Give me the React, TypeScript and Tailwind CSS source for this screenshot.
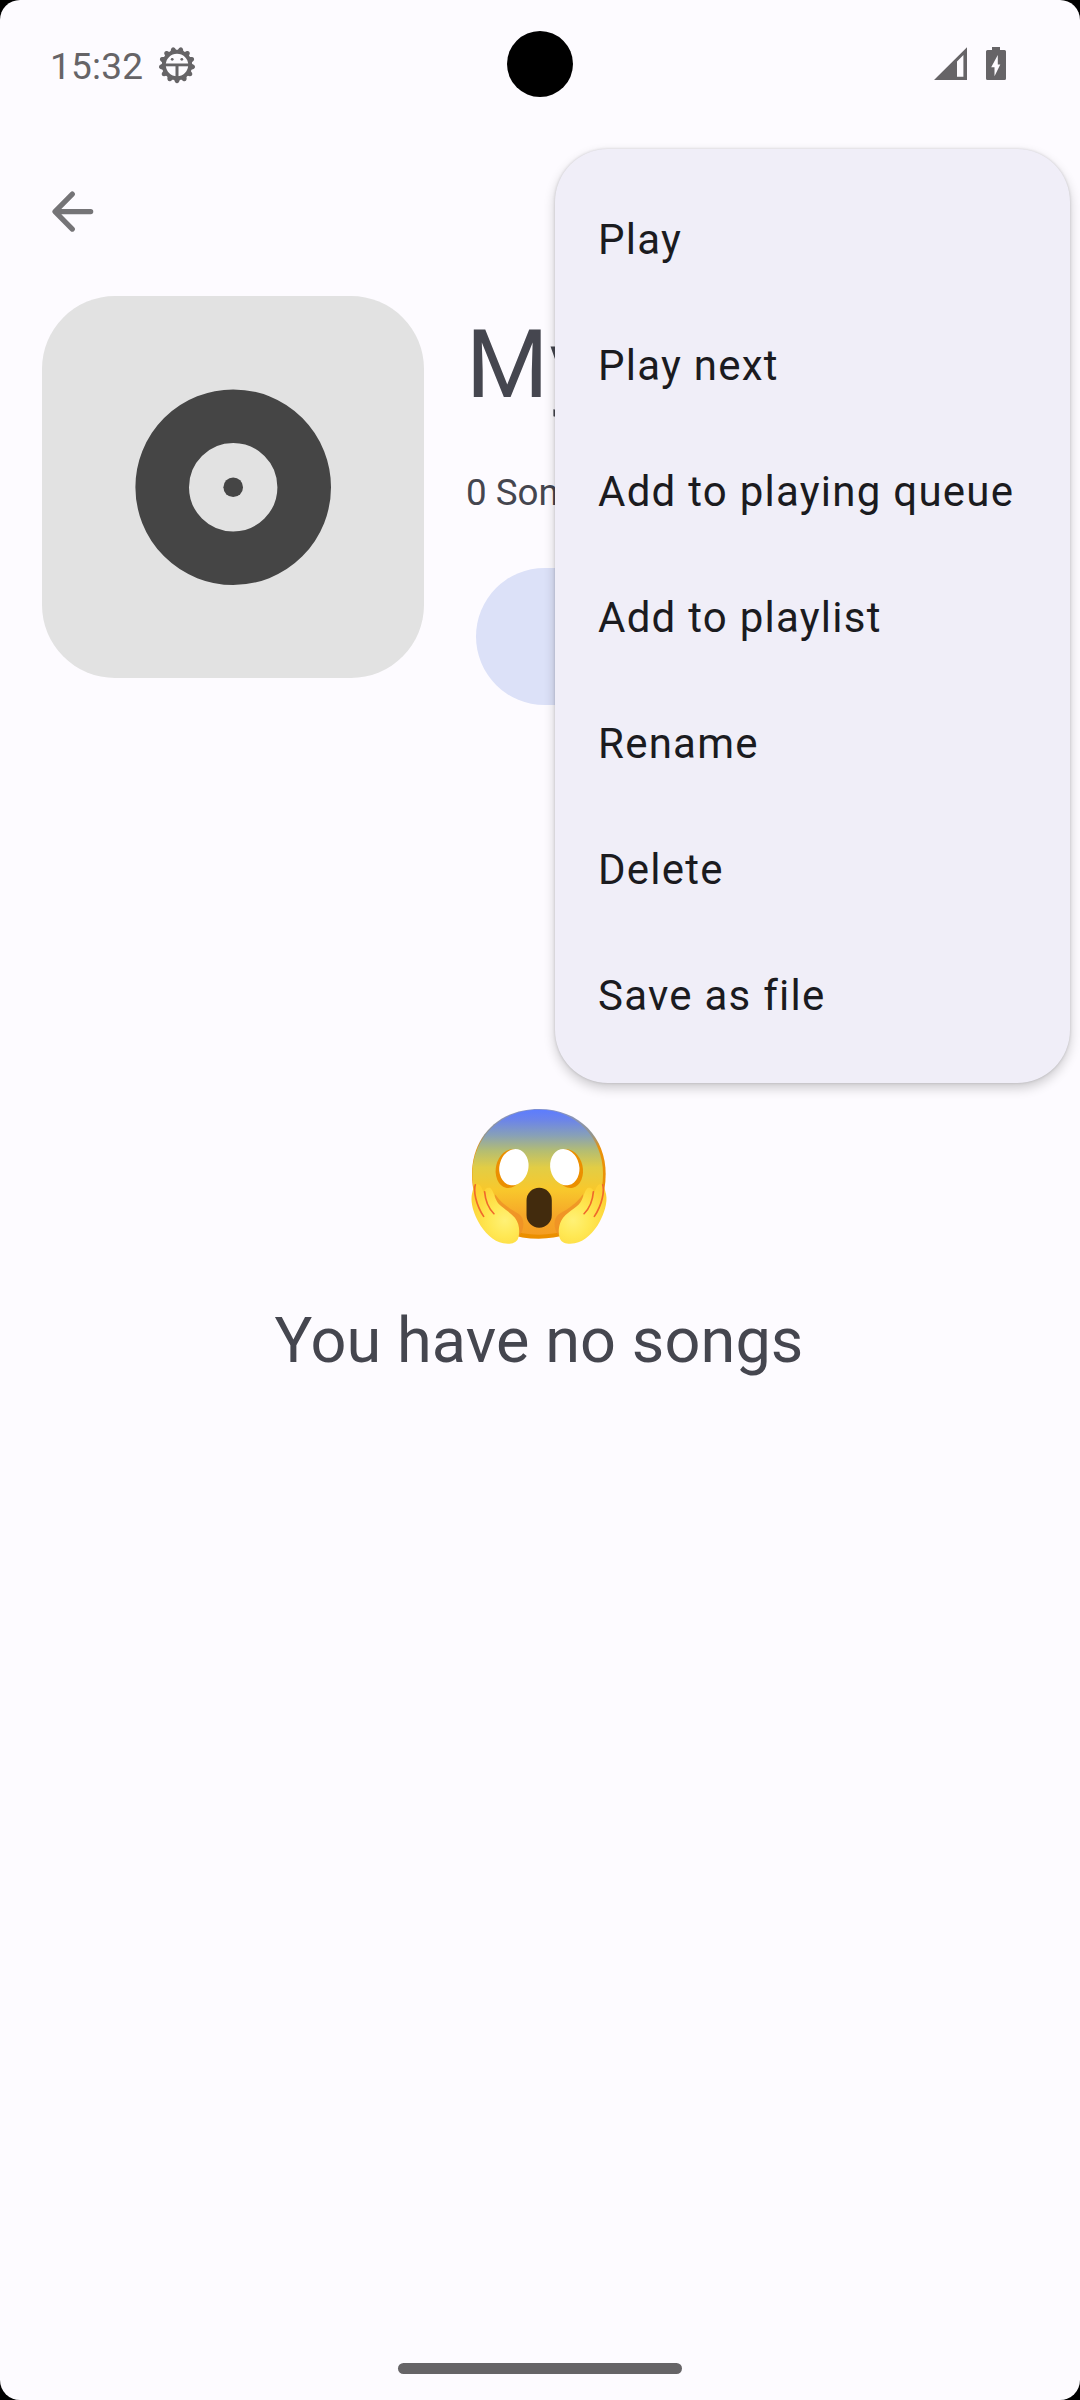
const menuItems = ['Play', 'Play next', 'Add to playing queue', 'Add to playlist', 'Rename', 'Delete', 'Save as file'];

const gearTeeth = Array.from({ length: 13 }, (_, i) => 180 + (i * 360) / 13);

function DebugIcon() {
  return (
    <svg className="ml-[16px] h-[38px] w-[38px]" viewBox="-19 -19 38 38" fill="#666467">
      {gearTeeth.map((angle) => (
        <path key={angle} d="M-3.6 -13L-2 -17Q0 -19.400 2 -17L3.6 -13Z" transform={`rotate(${angle})`} />
      ))}
      <circle r="13.200" fill="none" stroke="#666467" strokeWidth="4" />
      <rect x="-13" y="-1.5" width="26" height="2.8" />
      <rect x="-1.5" y="0" width="3" height="13" />
      <circle cx="-4.8" cy="-5.7" r="1.4" />
      <circle cx="4.8" cy="-5.7" r="1.4" />
    </svg>
  );
}

function SignalIcon() {
  return (
    <svg className="h-[34px] w-[34px]" viewBox="0 0 34 34" fill="#666467">
      <path fillRule="evenodd" d="M34 .3V33H1L34 .3ZM24 14.4V29.8H30.4V8L24 14.4Z" />
    </svg>
  );
}

function BatteryIcon() {
  return (
    <svg className="ml-[19px] h-[34px] w-[20px]" viewBox="0 0 20 34" fill="#666467">
      <path
        fillRule="evenodd"
        d="M6 0H14V3H18.5Q20 3 20 4.5V31.5Q20 33 18.5 33H1.5Q0 33 0 31.5V4.5Q0 3 1.5 3H6ZM11.8 8L5.2 20.3H8.5V29.2L14.3 17.6H11.8Z"
      />
    </svg>
  );
}

function StatusBar() {
  return (
    <header className="relative flex h-[128px] shrink-0 items-start justify-between pr-[74px] pl-[50px]">
      <div className="mt-[46px] flex h-[38px] items-center">
        <span className="w-[92px] pt-[3px] text-[37px] leading-[38px] tracking-[0.2px] whitespace-nowrap text-[#666467]">
          15:32
        </span>
        <DebugIcon />
      </div>
      <div className="absolute top-[31px] left-[507px] h-[66px] w-[66px] rounded-full bg-black" />
      <div className="mt-[47px] flex">
        <SignalIcon />
        <BatteryIcon />
      </div>
    </header>
  );
}

function DiscCover() {
  return (
    <div className="flex h-[382px] w-[382px] shrink-0 items-center justify-center rounded-[73px] bg-[#e2e2e2]">
      <svg className="h-[196px] w-[196px]" viewBox="-98 -98 196 196">
        <circle cx=".2" cy=".2" r="71" fill="none" stroke="#454545" strokeWidth="53.6" />
        <circle cx=".2" cy=".2" r="9.8" fill="#454545" />
      </svg>
    </div>
  );
}

function Hand() {
  return (
    <g>
      <path
        d="M238 468C255 445 255 415 237 402C205 383 185 370 166 343L150 380L215 465Z"
        fill="#ee8f26"
        opacity=".75"
      />
      <path
        d="M96 341C99 330 101 312 113 312C124 312 127 331 134 342C132 327 140 321 149 323C158 326 162 345 169 360C176 379 206 391 225 413C241 434 240 461 234 477C228 490 209 494 190 490C160 484 132 457 115 425C103 402 90 370 96 341Z"
        fill="url(#hand)"
      />
      <path d="M106 314C100 331 107 373 131 409" fill="none" stroke="#f0692c" strokeWidth="5" strokeLinecap="round" />
      <path d="M134 335C136 361 145 384 162 401" fill="none" stroke="#f0692c" strokeWidth="5" strokeLinecap="round" />
    </g>
  );
}

function ScreamingFace() {
  return (
    <svg className="mr-[2px] h-[138px] w-[138px]" viewBox="90 80 415 415">
      <defs>
        <linearGradient id="face" x1="0" y1="87" x2="0" y2="476" gradientUnits="userSpaceOnUse">
          <stop offset="0" stopColor="#5c7cff" />
          <stop offset=".08" stopColor="#6b84ea" />
          <stop offset=".2" stopColor="#87a0b8" />
          <stop offset=".32" stopColor="#b4bd72" />
          <stop offset=".45" stopColor="#e2cd45" />
          <stop offset=".62" stopColor="#f8c82c" />
          <stop offset=".82" stopColor="#f6a728" />
          <stop offset="1" stopColor="#f49b22" />
        </linearGradient>
        <linearGradient id="rim" x1="0" y1="87" x2="0" y2="476" gradientUnits="userSpaceOnUse">
          <stop offset="0" stopColor="#8493c9" />
          <stop offset=".2" stopColor="#93958c" />
          <stop offset=".3" stopColor="#eb9209" />
          <stop offset="1" stopColor="#eb8f00" />
        </linearGradient>
        <radialGradient id="hand" cx="195" cy="421" r="120" gradientUnits="userSpaceOnUse">
          <stop offset="0" stopColor="#fff176" />
          <stop offset=".4" stopColor="#ffe854" />
          <stop offset="1" stopColor="#fdd032" />
        </radialGradient>
      </defs>
      <path d="M297 86C422 86 498 174 498 281C498 410 421 476 297 476C174 476 96 410 96 281C96 174 172 86 297 86Z" fill="url(#rim)" />
      <path d="M297 88C410 88 490 174 490 281C490 400 420 464 297 464C181 464 97 400 97 281C97 174 182 88 297 88Z" fill="url(#face)" />
      <ellipse cx="211" cy="265" rx="43" ry="59" transform="rotate(13 211 265)" fill="#eb8f00" />
      <ellipse cx="386" cy="265" rx="43" ry="59" transform="rotate(-13 386 265)" fill="#eb8f00" />
      <ellipse cx="222" cy="261" rx="43.500" ry="55" transform="rotate(13 222 261)" fill="#fff" />
      <ellipse cx="375" cy="261" rx="43.500" ry="55" transform="rotate(-13 375 261)" fill="#fff" />
      <rect x="260" y="323" width="76" height="120" rx="38" fill="#422b0d" />
      <Hand />
      <g transform="translate(595 0) scale(-1 1)">
        <Hand />
      </g>
    </svg>
  );
}

function OverflowMenu() {
  return (
    <ul className="absolute top-[149px] left-[555px] w-[515px] rounded-[53px] bg-[#f0eef8] pt-[27px] pb-[25px] shadow-[0_5px_12px_rgba(0,0,0,0.2),0_0_3px_rgba(0,0,0,0.16)]">
      {menuItems.map((label) => (
        <li
          key={label}
          className="flex h-[126px] items-center pl-[43px] text-[42px] tracking-[1.25px] whitespace-nowrap text-[#1b1b1f]"
        >
          {label}
        </li>
      ))}
    </ul>
  );
}

export default function App() {
  return (
    <div className="h-[2400px] w-[1080px] overflow-hidden bg-black font-[Roboto,sans-serif]">
      <div className="relative flex h-full flex-col overflow-hidden rounded-[20px] bg-[#fdfbff]">
        <StatusBar />

        <nav className="flex h-[168px] shrink-0 items-start pl-[52px]">
          <svg className="mt-[62px] h-[44px] w-[44px]" viewBox="0 0 44 44" fill="none">
            <path
              d="M38.700 21.600H3.500M20.300 4.100L3 21.600L20.300 39.100"
              stroke="#757477"
              strokeWidth="5.200"
              strokeLinecap="round"
              strokeLinejoin="round"
            />
          </svg>
        </nav>

        <section className="flex h-[425px] shrink-0 gap-[42px] pl-[42px]">
          <DiscCover />
          <div className="flex grow flex-col">
            <h1 className="mt-[13px] text-[94.5px] leading-[112px] tracking-[1px] whitespace-nowrap text-[#45464f]">My</h1>
            <p className="mt-[50px] text-[36.75px] leading-[44px] text-[#45464f]">0 Songs</p>
            <div className="mt-[53px] ml-[10px] h-[137px] w-[270px] rounded-full bg-[#dce1f8]" />
          </div>
        </section>

        <main className="mt-[386px] flex grow flex-col items-center">
          <ScreamingFace />
          <p className="mt-[58px] mr-[2px] text-[63px] leading-[76px] tracking-[0.1px] text-[#45464f]">
            You have no songs
          </p>
        </main>

        <div className="mb-[26px] h-[11px] w-[284px] shrink-0 self-center rounded-full bg-[#666467]" />
        <OverflowMenu />
      </div>
    </div>
  );
}
